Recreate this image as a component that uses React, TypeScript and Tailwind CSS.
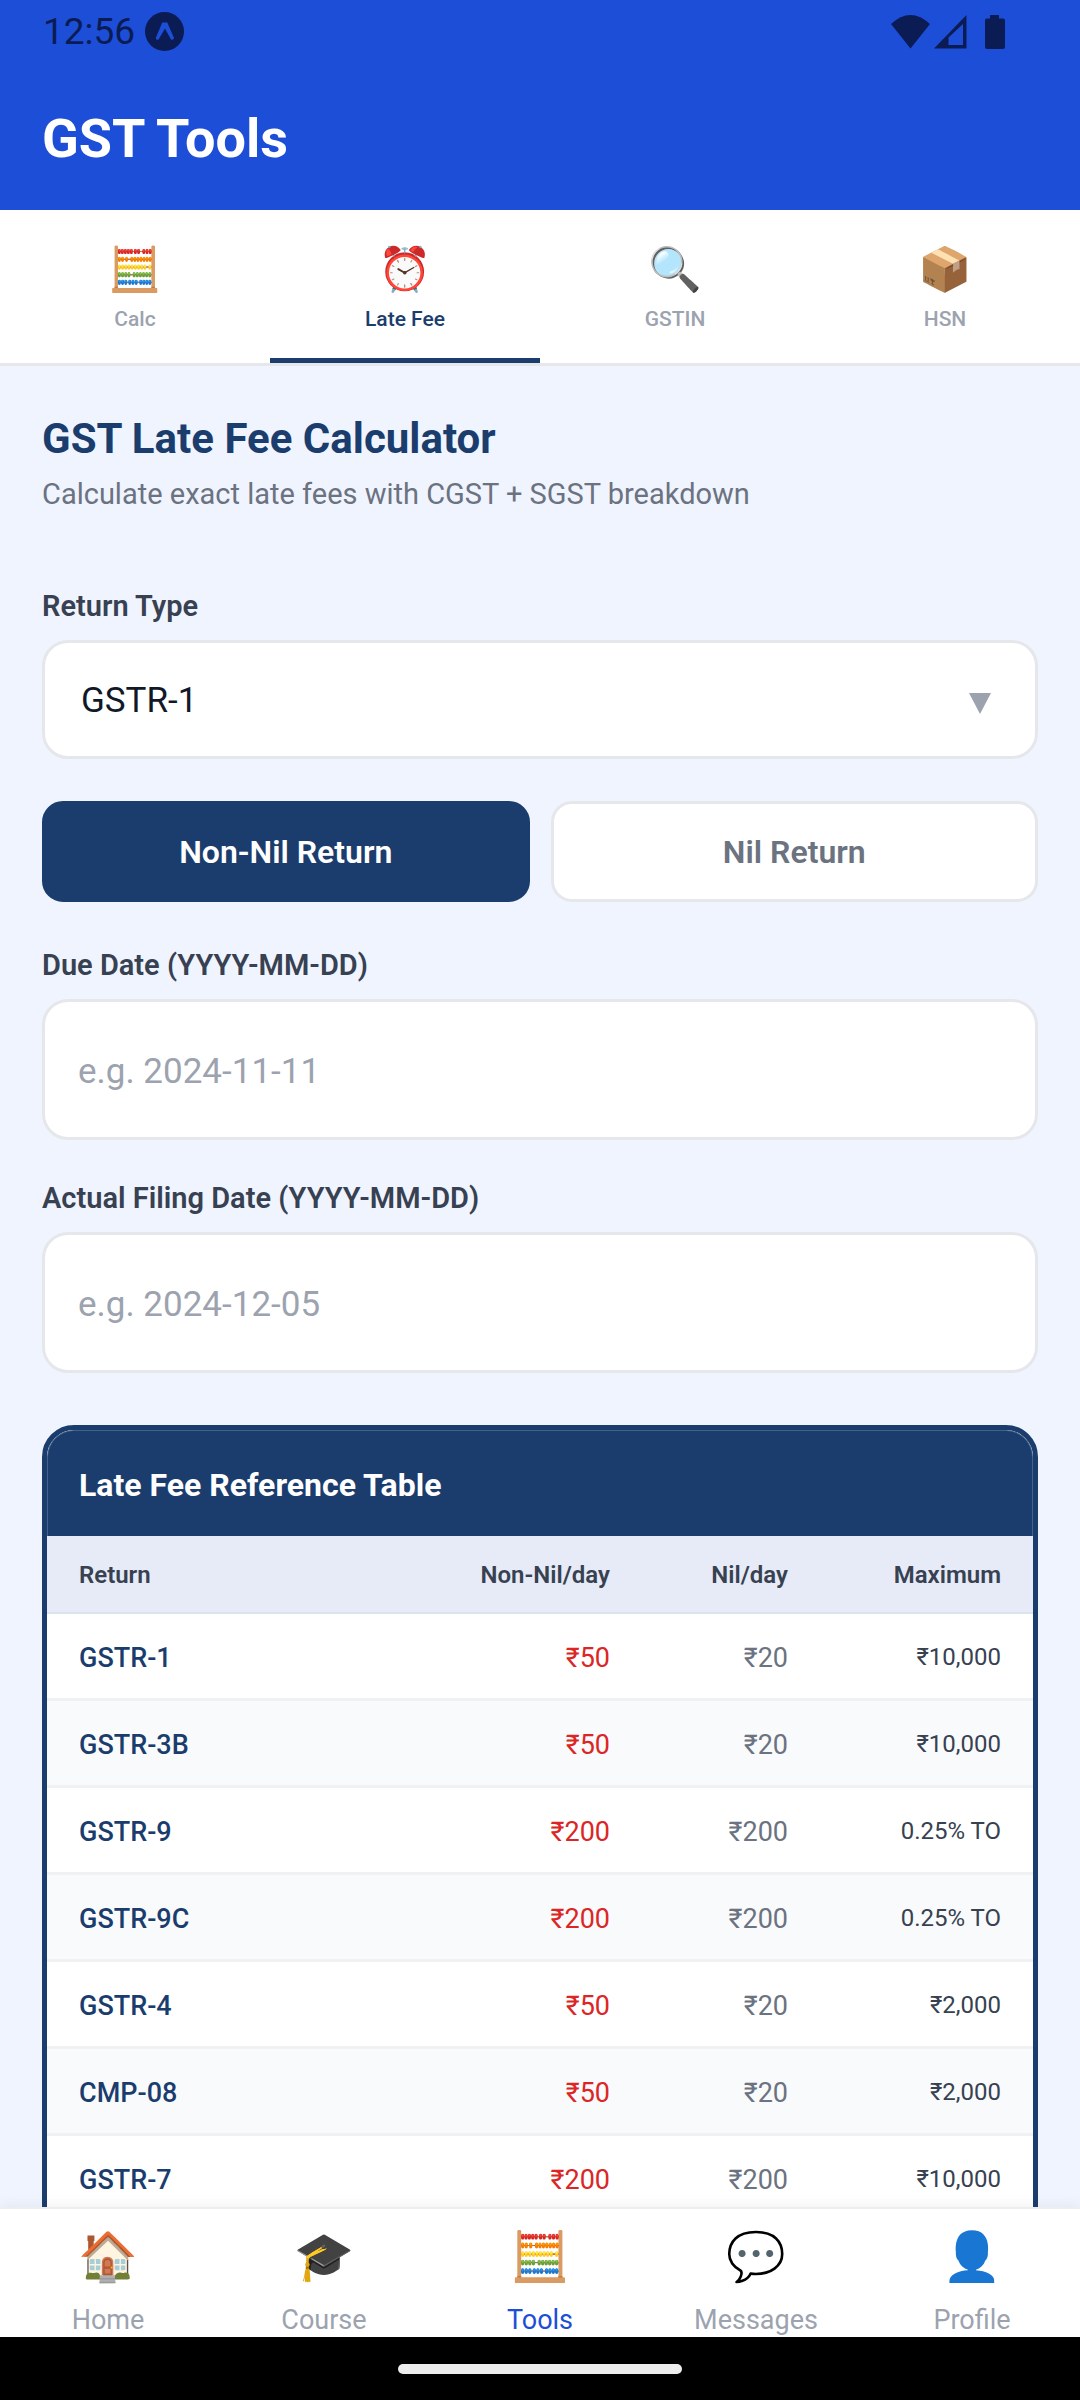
import React, { useState } from 'react';

const tabs = [
  { id: 'calc', label: 'Calc', icon: '🧮' },
  { id: 'late', label: 'Late Fee', icon: '⏰' },
  { id: 'gstin', label: 'GSTIN', icon: '🔍' },
  { id: 'hsn', label: 'HSN', icon: '📦' },
];

const navItems = [
  { id: 'home', label: 'Home', icon: '🏠' },
  { id: 'course', label: 'Course', icon: '🎓' },
  { id: 'tools', label: 'Tools', icon: '🧮' },
  { id: 'messages', label: 'Messages', icon: '💬' },
  { id: 'profile', label: 'Profile', icon: '👤' },
];

const feeRows = [
  { name: 'GSTR-1', nonNil: '₹50', nil: '₹20', max: '₹10,000' },
  { name: 'GSTR-3B', nonNil: '₹50', nil: '₹20', max: '₹10,000' },
  { name: 'GSTR-9', nonNil: '₹200', nil: '₹200', max: '0.25% TO' },
  { name: 'GSTR-9C', nonNil: '₹200', nil: '₹200', max: '0.25% TO' },
  { name: 'GSTR-4', nonNil: '₹50', nil: '₹20', max: '₹2,000' },
  { name: 'CMP-08', nonNil: '₹50', nil: '₹20', max: '₹2,000' },
  { name: 'GSTR-7', nonNil: '₹200', nil: '₹200', max: '₹10,000' },
];

const StatusBar = () => (
  <div className="flex h-[63px] items-center justify-between pl-[43px] pr-[75px] text-[#0b1c54]">
    <div className="flex items-center gap-[10px]">
      <span className="text-[37px] leading-[42px]">12:56</span>
      <svg width="39" height="39" viewBox="0 0 39 39" aria-hidden="true">
        <circle cx="19.5" cy="19.5" r="19.5" fill="currentColor" />
        <path d="M17.200 10.500H22.300L29 26Q28.500 28.600 26 27.500L20 16.500 13.500 27.500Q11 28.500 10.800 26Z" fill="#1d4ed8" />
      </svg>
    </div>
    <svg width="114" height="34" viewBox="0 0 114 34" fill="currentColor" aria-hidden="true">
      <path d="M0 9Q19.5-9 39 9L19.5 33.5Z" />
      <path fillRule="evenodd" d="M75.500 0V33.500H43ZM72 9 57.500 22.500V30H72Z" />
      <path d="M99 0H108V3.500H112Q114 3.500 114 5.500V32Q114 34 112 34H96Q94 34 94 32V5.500Q94 3.500 96 3.500H99Z" />
    </svg>
  </div>
);

interface DateFieldProps {
  id: string;
  label: string;
  placeholder: string;
}

const DateField: React.FC<DateFieldProps> = ({ id, label, placeholder }) => (
  <div className="flex flex-col gap-4">
    <label htmlFor={id} className="text-[29px] leading-9 font-semibold text-[#374151]">
      {label}
    </label>
    <input
      id={id}
      type="text"
      placeholder={placeholder}
      className="h-[141px] w-full rounded-[26px] border-3 border-[#e5e7eb] bg-white px-[33px] pt-1 text-[35px] text-[#111827] placeholder:text-[#9ca3af]"
    />
  </div>
);

const App = () => {
  const [activeTab, setActiveTab] = useState('late');
  const [isNil, setIsNil] = useState(false);

  return (
    <div className="flex h-screen flex-col overflow-hidden bg-[#f0f4ff] font-[Roboto,sans-serif]">
      <header className="shrink-0 bg-[#1d4ed8]">
        <StatusBar />
        <h1 className="px-[42px] pt-11 pb-10 text-[54px] leading-[63px] font-bold text-white">GST Tools</h1>
      </header>

      <div className="grid shrink-0 grid-cols-4 border-b-3 border-[#e5e7eb] bg-white">
        {tabs.map((tab) => (
          <button
            key={tab.id}
            type="button"
            onClick={() => setActiveTab(tab.id)}
            className={`flex flex-col items-center border-b-5 pt-[34px] pb-[25px] ${
              activeTab === tab.id ? 'border-[#1b3d6d] text-[#1b3d6d]' : 'border-transparent text-[#9ca3af]'
            }`}
          >
            <span className="flex h-[50px] items-center text-[43px] leading-none">{tab.icon}</span>
            <span className="mt-[11px] text-[21px] leading-7 font-medium">{tab.label}</span>
          </button>
        ))}
      </div>

      <main className="min-h-0 flex-1 overflow-y-auto px-[42px] pt-12 [scrollbar-width:none]">
        <h2 className="text-[42px] leading-[50px] font-bold text-[#1b3d6d]">GST Late Fee Calculator</h2>
        <p className="mt-3 text-[29px] leading-9 text-[#6b7280]">Calculate exact late fees with CGST + SGST breakdown</p>

        <div className="mt-[76px] flex flex-col gap-4">
          <label htmlFor="return-type" className="text-[29px] leading-9 font-semibold text-[#374151]">
            Return Type
          </label>
          <div className="relative">
            <select
              id="return-type"
              className="h-[119px] w-full appearance-none rounded-[26px] border-3 border-[#e5e7eb] bg-white px-9 pt-1 text-[35px] text-[#111827]"
            >
              {feeRows.map((row) => (
                <option key={row.name}>{row.name}</option>
              ))}
            </select>
            <svg className="pointer-events-none absolute top-[53px] right-[47px]" width="22" height="21" viewBox="0 0 22 21" aria-hidden="true">
              <path d="M0 0H22L11 21Z" fill="#9ca3af" />
            </svg>
          </div>
        </div>

        <div className="mt-[42px] grid grid-cols-2 gap-[21px]">
          <button
            type="button"
            aria-pressed={!isNil}
            onClick={() => setIsNil(false)}
            className={`h-[101px] rounded-[21px] border-3 text-[32px] font-semibold ${
              isNil ? 'border-[#e5e7eb] bg-white text-[#6b7280]' : 'border-[#1b3d6d] bg-[#1b3d6d] text-white'
            }`}
          >
            Non-Nil Return
          </button>
          <button
            type="button"
            aria-pressed={isNil}
            onClick={() => setIsNil(true)}
            className={`h-[101px] rounded-[21px] border-3 text-[32px] font-semibold ${
              isNil ? 'border-[#1b3d6d] bg-[#1b3d6d] text-white' : 'border-[#e5e7eb] bg-white text-[#6b7280]'
            }`}
          >
            Nil Return
          </button>
        </div>

        <div className="mt-[45px] flex flex-col gap-10">
          <DateField id="due-date" label="Due Date (YYYY-MM-DD)" placeholder="e.g. 2024-11-11" />
          <DateField id="filing-date" label="Actual Filing Date (YYYY-MM-DD)" placeholder="e.g. 2024-12-05" />
        </div>

        <section className="mt-[52px] mb-10 overflow-hidden rounded-[32px] border-5 border-[#1b3d6d] bg-white pb-10">
          <h3 className="rounded-t-[27px] border-x border-t border-[#46628a] bg-[#1b3d6d] px-[31px] pt-[33px] pb-[30px] text-[32px] leading-[42px] font-bold text-white">
            Late Fee Reference Table
          </h3>
          <table className="w-full table-fixed border-collapse">
            <thead>
              <tr className="border-b-2 border-[#dbe3ef] bg-[#e6ebf7] text-[24px] leading-8 text-[#374151]">
                <th className="pt-[23px] pb-[21px] pl-8 text-left font-semibold">Return</th>
                <th className="w-[212px] pt-[23px] pb-[21px] text-right font-semibold">Non-Nil/day</th>
                <th className="w-[178px] pt-[23px] pb-[21px] text-right font-semibold">Nil/day</th>
                <th className="w-[245px] pt-[23px] pr-8 pb-[21px] text-right font-semibold">Maximum</th>
              </tr>
            </thead>
            <tbody>
              {feeRows.map((row) => (
                <tr key={row.name} className="border-b-3 border-[#f0f1f3] align-top text-[27px] leading-[33px] even:bg-[#f9fafc]">
                  <td className="pt-7 pb-[23px] pl-8 font-medium text-[#1b3d6d]">{row.name}</td>
                  <td className="pt-7 pb-[23px] text-right text-[#dc2626]">{row.nonNil}</td>
                  <td className="pt-7 pb-[23px] text-right text-[#6b7280]">{row.nil}</td>
                  <td className="pt-7 pr-8 pb-[23px] text-right text-[24px] leading-[30px] text-[#374151]">{row.max}</td>
                </tr>
              ))}
            </tbody>
          </table>
        </section>
      </main>

      <nav className="z-10 grid shrink-0 grid-cols-5 border-t-2 border-[#eceef1] bg-white pb-px shadow-[0_-3px_12px_rgba(0,0,0,0.05)]">
        {navItems.map((item) => (
          <button
            key={item.id}
            type="button"
            className={`flex flex-col items-center pt-5 ${item.id === 'tools' ? 'text-[#1d4ed8]' : 'text-[#9ca3af]'}`}
          >
            <span className="flex h-14 items-center text-[48px] leading-none">{item.icon}</span>
            <span className="mt-[19px] text-[27px] leading-8">{item.label}</span>
          </button>
        ))}
      </nav>

      <div className="z-10 flex h-[63px] shrink-0 items-center justify-center bg-black">
        <div className="h-[10px] w-[284px] rounded-full bg-[#ededed]" />
      </div>
    </div>
  );
};

export default App;
